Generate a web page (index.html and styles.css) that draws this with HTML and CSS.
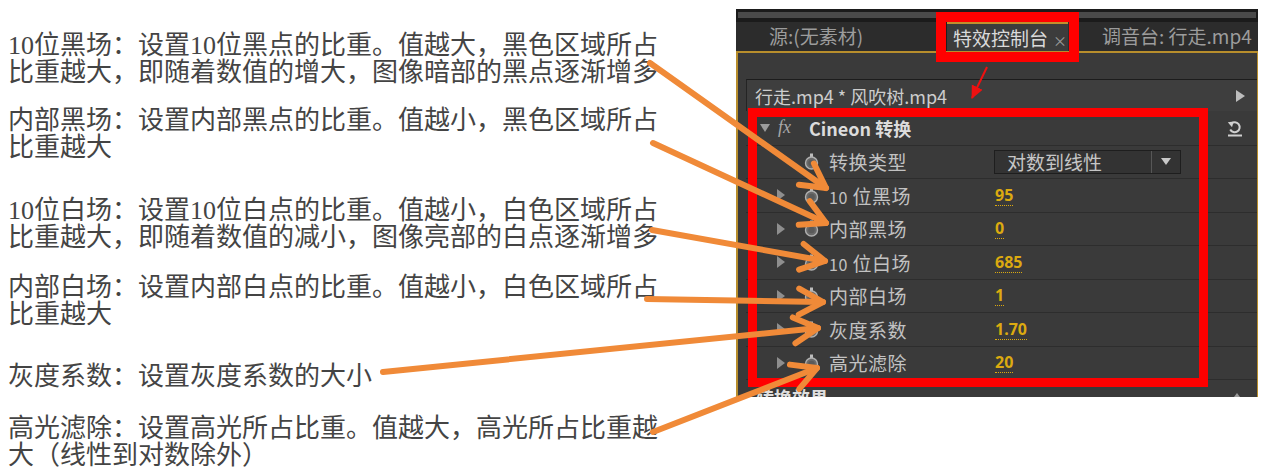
FILE: index.html
```html
<!DOCTYPE html>
<html lang="zh-CN">
<head>
<meta charset="utf-8">
<title>Cineon 转换</title>
<link rel="stylesheet" href="styles.css">
</head>
<body>
<div class="page">
  <section class="notes">
    <p class="note note-1"><span class="ln">10位黑场：设置10位黑点的比重。值越大，黑色区域所占</span><span class="ln">比重越大，即随着数值的增大，图像暗部的黑点逐渐增多</span></p>
    <p class="note note-2"><span class="ln">内部黑场：设置内部黑点的比重。值越小，黑色区域所占</span><span class="ln">比重越大</span></p>
    <p class="note note-3"><span class="ln">10位白场：设置10位白点的比重。值越小，白色区域所占</span><span class="ln">比重越大，即随着数值的减小，图像亮部的白点逐渐增多</span></p>
    <p class="note note-4"><span class="ln">内部白场：设置内部白点的比重。值越小，白色区域所占</span><span class="ln">比重越大</span></p>
    <p class="note note-5"><span class="ln">灰度系数：设置灰度系数的大小</span></p>
    <p class="note note-6"><span class="ln">高光滤除：设置高光所占比重。值越大，高光所占比重越</span><span class="ln">大（线性到对数除外）</span></p>
  </section>

  <section class="panel">
    <div class="grip-bar"><div class="grip"></div></div>
    <div class="tabs">
      <div class="tab tab-source">源:(无素材)</div>
      <div class="tab tab-active">特效控制台<span class="tab-close">×</span></div>
      <div class="tab tab-mixer">调音台: 行走.mp4</div>
    </div>
    <div class="frame">
      <div class="clip-bar"><span>行走.mp4 * 风吹树.mp4</span><span class="play"></span></div>

      <div class="effect-head">
        <span class="twirl-open"></span>
        <span class="fx">fx</span>
        <span class="effect-name">Cineon 转换</span>
        <svg class="reset" viewBox="0 0 16 18" width="16" height="18">
          <path d="M4.2 4.6 A5 5 0 1 1 3.2 10.5" fill="none" stroke="#d0d0d0" stroke-width="2"/>
          <path d="M0.8 3.2 L6.8 2.6 L5 8.2 Z" fill="#d0d0d0"/>
          <rect x="1" y="15.5" width="14" height="2" fill="#d0d0d0"/>
        </svg>
      </div>

      <div class="prop">
        <div class="prop-name"><span class="twirl is-empty"></span>
          <svg class="watch" viewBox="0 0 15 17"><rect x="6" y="0.5" width="3" height="3.5" fill="#bdbdbd"/><circle cx="7.5" cy="10" r="6" fill="#6a6a6a" stroke="#b0b0b0" stroke-width="1.4"/><circle cx="7.5" cy="10" r="3.2" fill="#5a5a5a"/></svg>
          <span class="label">转换类型</span></div>
        <div class="dropdown"><span class="dropdown-text">对数到线性</span><span class="dropdown-btn"><span class="dropdown-arrow"></span></span></div>
      </div>
      <div class="prop">
        <div class="prop-name"><span class="twirl"></span>
          <svg class="watch" viewBox="0 0 15 17"><rect x="6" y="0.5" width="3" height="3.5" fill="#bdbdbd"/><circle cx="7.5" cy="10" r="6" fill="#6a6a6a" stroke="#b0b0b0" stroke-width="1.4"/><circle cx="7.5" cy="10" r="3.2" fill="#5a5a5a"/></svg>
          <span class="label"><span class="num">10</span> 位黑场</span></div>
        <span class="value">95</span>
      </div>
      <div class="prop">
        <div class="prop-name"><span class="twirl"></span>
          <svg class="watch" viewBox="0 0 15 17"><rect x="6" y="0.5" width="3" height="3.5" fill="#bdbdbd"/><circle cx="7.5" cy="10" r="6" fill="#6a6a6a" stroke="#b0b0b0" stroke-width="1.4"/><circle cx="7.5" cy="10" r="3.2" fill="#5a5a5a"/></svg>
          <span class="label">内部黑场</span></div>
        <span class="value">0</span>
      </div>
      <div class="prop">
        <div class="prop-name"><span class="twirl"></span>
          <svg class="watch" viewBox="0 0 15 17"><rect x="6" y="0.5" width="3" height="3.5" fill="#bdbdbd"/><circle cx="7.5" cy="10" r="6" fill="#6a6a6a" stroke="#b0b0b0" stroke-width="1.4"/><circle cx="7.5" cy="10" r="3.2" fill="#5a5a5a"/></svg>
          <span class="label"><span class="num">10</span> 位白场</span></div>
        <span class="value">685</span>
      </div>
      <div class="prop">
        <div class="prop-name"><span class="twirl"></span>
          <svg class="watch" viewBox="0 0 15 17"><rect x="6" y="0.5" width="3" height="3.5" fill="#bdbdbd"/><circle cx="7.5" cy="10" r="6" fill="#6a6a6a" stroke="#b0b0b0" stroke-width="1.4"/><circle cx="7.5" cy="10" r="3.2" fill="#5a5a5a"/></svg>
          <span class="label">内部白场</span></div>
        <span class="value">1</span>
      </div>
      <div class="prop">
        <div class="prop-name"><span class="twirl"></span>
          <svg class="watch" viewBox="0 0 15 17"><rect x="6" y="0.5" width="3" height="3.5" fill="#bdbdbd"/><circle cx="7.5" cy="10" r="6" fill="#6a6a6a" stroke="#b0b0b0" stroke-width="1.4"/><circle cx="7.5" cy="10" r="3.2" fill="#5a5a5a"/></svg>
          <span class="label">灰度系数</span></div>
        <span class="value">1.70</span>
      </div>
      <div class="prop">
        <div class="prop-name"><span class="twirl"></span>
          <svg class="watch" viewBox="0 0 15 17"><rect x="6" y="0.5" width="3" height="3.5" fill="#bdbdbd"/><circle cx="7.5" cy="10" r="6" fill="#6a6a6a" stroke="#b0b0b0" stroke-width="1.4"/><circle cx="7.5" cy="10" r="3.2" fill="#5a5a5a"/></svg>
          <span class="label">高光滤除</span></div>
        <span class="value">20</span>
      </div>

      <div class="effect-next"><span>转换效果</span><span class="collapse"></span></div>
    </div>
  </section>
</div>

<div class="hl hl-tab"></div>
<div class="hl hl-effect"></div>

<svg class="arrows" viewBox="0 0 1264 474" width="1264" height="474">
  <defs>
    <marker id="ah" markerUnits="userSpaceOnUse" markerWidth="36" markerHeight="36" viewBox="0 0 36 36" refX="31" refY="18" orient="auto">
      <path d="M7 5 L31 18 L7 31" fill="none" stroke="#f08a38" stroke-width="6" stroke-linecap="round" stroke-linejoin="round"/>
    </marker>
    <marker id="rh" markerUnits="userSpaceOnUse" markerWidth="14" markerHeight="14" viewBox="0 0 14 14" refX="12" refY="7" orient="auto">
      <path d="M0 1 L13 7 L0 13 Z" fill="#ee1111"/>
    </marker>
  </defs>
  <g stroke="#f08a38" stroke-width="6" stroke-linecap="round" fill="none">
    <line x1="650" y1="63" x2="826" y2="188" marker-end="url(#ah)"/>
    <line x1="653" y1="143" x2="826" y2="223" marker-end="url(#ah)"/>
    <line x1="652" y1="230" x2="825" y2="261" marker-end="url(#ah)"/>
    <line x1="647" y1="299" x2="823" y2="302" marker-end="url(#ah)"/>
    <line x1="383" y1="372" x2="818" y2="328" marker-end="url(#ah)"/>
    <line x1="653" y1="432" x2="817" y2="368" marker-end="url(#ah)"/>
  </g>
  <line x1="987" y1="67" x2="972" y2="98" stroke="#ee1111" stroke-width="2" marker-end="url(#rh)"/>
</svg>
</body>
</html>
```

FILE: styles.css
```css
* {
  box-sizing: border-box;
}

body {
  margin: 0;
  width: 1264px;
  height: 474px;
  overflow: hidden;
  background: #ffffff;
  position: relative;
}

.page {
  display: flex;
  align-items: flex-start;
}

/* ---------- left notes ---------- */
.notes {
  width: 736px;
  flex: none;
  padding-left: 8px;
  font-family: "Liberation Serif", "Noto Sans CJK SC", serif;
  font-size: 26px;
  line-height: 27px;
  color: #444444;
}

.note {
  margin: 0;
}

.ln {
  display: block;
  white-space: nowrap;
}

.note-1 { margin-top: 32px; }
.note-2 { margin-top: 21px; }
.note-3 { margin-top: 36px; }
.note-4 { margin-top: 23px; }
.note-5 { margin-top: 35px; }
.note-6 { margin-top: 25px; }

/* ---------- panel ---------- */
.panel {
  margin-top: 9px;
  width: 522px;
  height: 388px;
  flex: none;
  background: #393939;
  overflow: hidden;
  display: flex;
  flex-direction: column;
  font-family: "Noto Sans CJK SC", "Noto Sans", sans-serif;
}

.grip-bar {
  height: 13px;
  flex: none;
  background: #1b1b1b;
  padding: 3px 2px 4px;
}

.grip {
  height: 6px;
  background: #4a4a4a;
}

.tabs {
  height: 29px;
  flex: none;
  display: flex;
  background: #2c2c2c;
  font-size: 19px;
  line-height: 27px;
}

.tab {
  color: #9c9c9c;
  white-space: nowrap;
}

.tab-source {
  width: 211px;
  flex: none;
  padding-left: 33px;
  border-right: 1px solid #1f1f1f;
}

.tab-active {
  width: 121px;
  flex: none;
  padding-left: 6px;
  background: #3c3c3c;
  color: #dadada;
  border-top: 2px solid #c28f2c;
}

.tab-close {
  font-size: 14px;
  color: #9a9a9a;
  margin-left: 5px;
}

.tab-mixer {
  padding-left: 34px;
}

.frame {
  flex: 1;
  background: #3a3a3a;
  border-top: 2px solid #b88e2c;
  border-left: 2px solid #b88e2c;
  border-right: 1px solid #b88e2c;
  padding: 26px 0 0 8px;
}

.clip-bar {
  height: 32px;
  display: flex;
  align-items: center;
  justify-content: space-between;
  padding: 0 12px 0 8px;
  background: #3e3e3e;
  border-top: 1px solid #1c1c1c;
  border-left: 1px solid #242424;
  font-size: 18px;
  color: #cdcdcd;
  white-space: nowrap;
}

.play {
  width: 0;
  height: 0;
  border-left: 9px solid #bdbdbd;
  border-top: 6px solid transparent;
  border-bottom: 6px solid transparent;
}

.effect-head {
  height: 34.5px;
  display: flex;
  align-items: center;
  padding-left: 14px;
  border-bottom: 1px solid #2d2d2d;
  color: #dcdcdc;
  font-size: 18px;
  font-weight: 700;
}

.twirl-open {
  width: 0;
  height: 0;
  border-top: 8px solid #9c9c9c;
  border-left: 5px solid transparent;
  border-right: 5px solid transparent;
}

.fx {
  margin-left: 8px;
  font-family: "Liberation Serif", serif;
  font-style: italic;
  font-weight: 400;
  font-size: 18px;
  color: #a8a8a8;
}

.effect-name {
  margin-left: 18px;
  white-space: nowrap;
}

.reset {
  margin-left: auto;
  margin-right: 14px;
}

.prop {
  height: 33.5px;
  display: grid;
  grid-template-columns: 249px 1fr;
  align-items: center;
  border-bottom: 1px solid #2d2d2d;
  font-size: 19px;
  color: #c2c2c2;
}

.prop-name {
  display: flex;
  align-items: center;
  padding-left: 31px;
}

.twirl {
  width: 0;
  height: 0;
  flex: none;
  border-left: 8px solid #8e8e8e;
  border-top: 6px solid transparent;
  border-bottom: 6px solid transparent;
}

.twirl.is-empty {
  visibility: hidden;
}

.watch {
  width: 15px;
  height: 17px;
  flex: none;
  margin-left: 19px;
}

.label {
  margin-left: 10px;
  white-space: nowrap;
  letter-spacing: 0.5px;
}

.num {
  font-size: 16px;
}

.value {
  justify-self: start;
  color: #dcaa10;
  font-family: "Noto Sans", "Noto Sans CJK SC", sans-serif;
  font-size: 16px;
  font-weight: 700;
  line-height: 20px;
  border-bottom: 1px dotted #dcaa10;
}

.dropdown {
  width: 187px;
  height: 24px;
  margin-left: -1px;
  display: flex;
  align-items: center;
  border: 1px solid #1e1e1e;
  background: #333333;
  color: #c6c6c6;
  font-size: 19px;
}

.dropdown-text {
  flex: 1;
  padding-left: 12px;
  white-space: nowrap;
}

.dropdown-btn {
  width: 29px;
  height: 100%;
  display: flex;
  align-items: center;
  justify-content: center;
  border-left: 1px solid #575757;
}

.dropdown-arrow {
  width: 0;
  height: 0;
  border-top: 7px solid #c8c8c8;
  border-left: 5px solid transparent;
  border-right: 5px solid transparent;
}

.effect-next {
  height: 33px;
  display: flex;
  align-items: center;
  justify-content: space-between;
  padding: 0 14px 0 10px;
  color: #dedede;
  font-size: 18px;
  font-weight: 700;
}

.collapse {
  width: 0;
  height: 0;
  border-bottom: 8px solid #9a9a9a;
  border-left: 6px solid transparent;
  border-right: 6px solid transparent;
}

/* ---------- overlays ---------- */
.hl {
  position: absolute;
  border-style: solid;
  border-color: #ff0000;
  pointer-events: none;
}

.hl-tab {
  left: 936px;
  top: 12px;
  width: 143px;
  height: 50px;
  border-width: 10px;
}

.hl-effect {
  left: 748px;
  top: 108px;
  width: 460px;
  height: 279px;
  border-width: 9px;
}

.arrows {
  position: absolute;
  left: 0;
  top: 0;
  pointer-events: none;
}
```
